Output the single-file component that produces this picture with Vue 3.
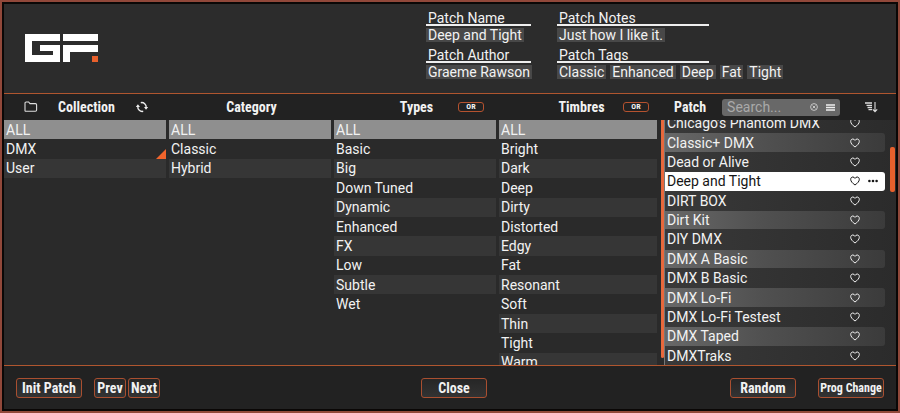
<script setup>
import { ref } from 'vue'

const lists = [
  { title: 'Collection', items: ['ALL', 'DMX', 'User'], tools: true, flagged: 'DMX' },
  { title: 'Category', items: ['ALL', 'Classic', 'Hybrid'] },
  {
    title: 'Types',
    items: ['ALL', 'Basic', 'Big', 'Down Tuned', 'Dynamic', 'Enhanced', 'FX', 'Low', 'Subtle', 'Wet'],
    or: true,
  },
  {
    title: 'Timbres',
    items: ['ALL', 'Bright', 'Dark', 'Deep', 'Dirty', 'Distorted', 'Edgy', 'Fat', 'Resonant', 'Soft', 'Thin', 'Tight', 'Warm'],
    or: true,
    thumb: true,
  },
]
const patches = [
  "Chicago's Phantom DMX", 'Classic+ DMX', 'Dead or Alive', 'Deep and Tight', 'DIRT BOX', 'Dirt Kit', 'DIY DMX',
  'DMX A Basic', 'DMX B Basic', 'DMX Lo-Fi', 'DMX Lo-Fi Testest', 'DMX Taped', 'DMXTraks',
]
const tags = ['Classic', 'Enhanced', 'Deep', 'Fat', 'Tight']
const picked = ref(['ALL', 'ALL', 'ALL', 'ALL'])
const current = ref('Deep and Tight')
const query = ref('')
</script>

<template>
  <div class="frame">
    <header class="top">
      <svg class="logo" viewBox="0 0 73 28" role="img" aria-label="GF">
        <path fill="#fff" d="M0 0H35V7H7V21H28V17H15V11H35V28H0Z" />
        <path fill="#fff" d="M38 0H73V7H38ZM38 11H73V18H45V28H38Z" />
        <path fill="#e8602c" d="M67 22h6v6h-6z" />
      </svg>
      <dl class="info">
        <div class="field">
          <dt>Patch Name</dt>
          <dd><span class="chip">Deep and Tight</span></dd>
        </div>
        <div class="field">
          <dt>Patch Notes</dt>
          <dd><span class="chip">Just how I like it.</span></dd>
        </div>
        <div class="field">
          <dt>Patch Author</dt>
          <dd><span class="chip">Graeme Rawson</span></dd>
        </div>
        <div class="field">
          <dt>Patch Tags</dt>
          <dd class="tags"><span v-for="t in tags" :key="t" class="chip">{{ t }}</span></dd>
        </div>
      </dl>
    </header>

    <main class="browser">
      <section v-for="(l, i) in lists" :key="l.title" class="column" :class="{ scrolls: l.thumb }">
        <div class="head">
          <span class="side">
            <button v-if="l.tools" class="icon" aria-label="Open folder">
              <svg width="14" height="12" viewBox="0 0 14 12">
                <path d="M1 10V2.2Q1 1 2.2 1H4.6L6 2.6H11.4Q12.6 2.6 12.6 3.8V9Q12.6 10.2 11.4 10.2H1.6Q1 10.2 1 9.6Z" fill="none" stroke="#ddd" stroke-width="1.1" />
              </svg>
            </button>
          </span>
          <h2>{{ l.title }}</h2>
          <span class="side" :class="{ end: l.or }">
            <button v-if="l.tools" class="icon" aria-label="Refresh">
              <svg width="12" height="12" viewBox="0 0 12 12">
                <path d="M4.8 1.7A4.4 4.4 0 0 1 10.2 6.4M7.2 10.3A4.4 4.4 0 0 1 1.8 5.6" fill="none" stroke="#eee" stroke-width="1.4" />
                <path d="M8 6h4.2L10 8.8ZM-.2 6H4L1.9 3.2Z" fill="#eee" />
              </svg>
            </button>
            <button v-if="l.or" class="or">OR</button>
          </span>
        </div>
        <div class="body">
          <ul class="rows">
            <li v-for="item in l.items" :key="item">
              <button class="row" :class="{ on: picked[i] === item, flag: l.flagged === item }" @click="picked[i] = item">{{ item }}</button>
            </li>
          </ul>
          <span v-if="l.thumb" class="thumb"></span>
        </div>
      </section>

      <section class="column patch">
        <div class="head">
          <h2>Patch</h2>
          <div class="search">
            <input v-model="query" type="text" placeholder="Search..." aria-label="Search patches" />
            <button class="icon" aria-label="Clear search" @click="query = ''">
              <svg width="8" height="8" viewBox="0 0 8 8" fill="none" stroke="#ddd" stroke-width=".8">
                <circle cx="4" cy="4" r="3.4" />
                <path d="M2.6 2.6 5.4 5.4M5.4 2.6 2.6 5.4" />
              </svg>
            </button>
            <button class="icon" aria-label="Search options">
              <svg width="9" height="7" viewBox="0 0 9 7"><path d="M0 1H9M0 3.5H9M0 6H9" stroke="#eee" stroke-width="1.3" /></svg>
            </button>
          </div>
          <button class="icon sort" aria-label="Sort">
            <svg width="13" height="11" viewBox="0 0 13 11" fill="none" stroke="#ddd">
              <path d="M0 1H7M1.5 3.3H7M2.5 5.5H7M3.5 7.7H7" stroke-width="1.3" />
              <path d="M10 0V9.5M7.8 7.3 10 9.7 12.2 7.3" stroke-width="1.1" />
            </svg>
          </button>
        </div>
        <div class="body">
          <ul class="rows">
            <li v-for="p in patches" :key="p" class="preset" :class="{ active: p === current }">
              <button class="name" @click="current = p">{{ p }}</button>
              <button class="icon" :aria-label="'Favourite ' + p">
                <svg width="10" height="10" viewBox="0 0 10 10">
                  <path d="M5 9C2.5 7.2.7 5.4.7 3.4.7 1.9 1.7 1 2.8 1 3.8 1 4.6 1.6 5 2.4 5.4 1.6 6.2 1 7.2 1 8.3 1 9.3 1.9 9.3 3.4 9.3 5.4 7.5 7.2 5 9Z" fill="none" stroke="currentColor" />
                </svg>
              </button>
              <span class="more">
                <button v-if="p === current" class="icon" aria-label="More actions">
                  <svg width="10" height="4" viewBox="0 0 10 4" fill="currentColor"><circle cx="1.4" cy="2" r="1.3" /><circle cx="5" cy="2" r="1.3" /><circle cx="8.6" cy="2" r="1.3" /></svg>
                </button>
              </span>
            </li>
          </ul>
          <div class="track"><span class="knob"></span></div>
        </div>
      </section>
    </main>

    <footer class="actions">
      <div class="group">
        <button class="btn">Init Patch</button>
        <span class="pair">
          <button class="btn small">Prev</button>
          <button class="btn small">Next</button>
        </span>
      </div>
      <button class="btn">Close</button>
      <div class="group right">
        <button class="btn">Random</button>
        <button class="btn long">Prog Change</button>
      </div>
    </footer>
  </div>
</template>

<style>
body {
  background: #000;
}
</style>

<style scoped>
* {
  box-sizing: border-box;
  margin: 0;
  padding: 0;
}
.frame {
  display: flex;
  flex-direction: column;
  height: 100vh;
  border: 2px solid #91483a;
  padding: 2px;
  background: #0a0706;
  color: #f2f2f2;
  font: 14px/16px Roboto, "Noto Sans", sans-serif;
}
button,
input {
  font: inherit;
  color: inherit;
  background: none;
  border: 0;
}
button {
  cursor: pointer;
  white-space: nowrap;
}
ul {
  list-style: none;
}
svg {
  display: block;
}
.top {
  display: grid;
  grid-template-columns: 422fr 470fr;
  align-items: start;
  height: 90px;
  flex: none;
  background: #2c2c2c;
  border-bottom: 1px solid #b0562f;
}
.logo {
  width: 73px;
  margin: 30px 0 0 21px;
}
.info {
  display: grid;
  grid-template-columns: 105px 152px;
  column-gap: 26px;
  row-gap: 5px;
  padding-top: 6px;
}
dt {
  padding-left: 2px;
  border-bottom: 2px solid #eee;
  height: 16px;
}
dd {
  display: flex;
  padding-top: 2px;
}
.tags {
  gap: 4px;
}
.chip {
  padding: 0 2px;
  line-height: 14px;
  white-space: nowrap;
  background: #484848;
}
.browser {
  display: grid;
  grid-template-columns: repeat(4, minmax(0, 165fr)) minmax(0, 232fr);
  flex: 1;
  min-height: 0;
  background: #2a2a2a;
}
.column {
  display: flex;
  flex-direction: column;
  min-width: 0;
  min-height: 0;
}
.head {
  display: grid;
  grid-template-columns: 1fr auto 1fr;
  align-items: center;
  flex: none;
  height: 26px;
  background: #222;
}
h2,
.btn {
  font: bold 14px/20px "Roboto Condensed", "Liberation Sans Narrow", sans-serif;
}
.side {
  display: flex;
  justify-content: center;
}
.end {
  justify-content: flex-end;
  padding-right: 15px;
}
.or {
  width: 26px;
  height: 10px;
  border: 1px solid #b5522f;
  border-radius: 3px;
  font: bold 8px/8px "Roboto Condensed", "Liberation Sans Narrow", sans-serif;
}
.body {
  display: flex;
  flex: 1;
  min-height: 0;
  padding-right: 3px;
  overflow: hidden;
}
.rows {
  display: grid;
  grid-template-rows: repeat(13, minmax(0, 1fr));
  flex: 1;
  min-width: 0;
  height: 252px;
}
.row {
  display: flex;
  align-items: center;
  position: relative;
  width: 100%;
  height: 100%;
  padding-left: 2px;
}
li:nth-child(odd) .row {
  background: #363636;
}
li .row.on {
  background: #8f8f8f;
}
.flag::after {
  content: "";
  position: absolute;
  right: 0;
  bottom: 0;
  border: 5px solid transparent;
  border-right-color: #f0642c;
  border-bottom-color: #f0642c;
}
.scrolls .body {
  gap: 4px;
  padding-right: 0;
}
.thumb {
  width: 3px;
  margin-bottom: 7px;
  border-radius: 0 0 2px 2px;
  background: #e8683c;
}
.patch .head {
  grid-template-columns: auto minmax(0, 118px) 1fr;
  gap: 16px;
  padding: 0 10px;
}
.search {
  display: flex;
  align-items: center;
  gap: 8px;
  height: 17px;
  padding: 0 5px;
  border-radius: 3px;
  background: #686868;
}
.search input {
  flex: 1;
  min-width: 0;
  outline: 0;
}
.search input::placeholder {
  color: #aaa;
  opacity: 1;
}
.sort {
  justify-self: center;
}
.patch .body {
  padding-right: 1px;
  background: linear-gradient(90deg, #393939, #2b2b2b);
}
.patch .rows {
  margin-top: -6px;
  border-left: 1px solid #777;
}
.preset {
  display: flex;
  align-items: center;
  margin-bottom: 1px;
  padding-left: 2px;
  border-radius: 0 3px 3px 0;
}
.preset:nth-child(even) {
  background: linear-gradient(90deg, #686868, #505050 45%, #3b3b3b);
}
.preset.active {
  background: #fff;
  color: #151515;
}
.name {
  flex: 1;
  min-width: 0;
  text-align: left;
}
.more {
  display: flex;
  justify-content: center;
  width: 25px;
}
.track {
  width: 10px;
  padding: 27px 0 0 5px;
}
.knob {
  display: block;
  width: 5px;
  height: 45px;
  border-radius: 2px;
  background: #e8602c;
}
.actions {
  display: grid;
  grid-template-columns: 405fr 66px 397fr;
  align-items: center;
  flex: none;
  height: 44px;
  padding: 0 12px;
  border-top: 1px solid #b0562f;
  background: #222;
}
.group,
.pair {
  display: flex;
  gap: 12px;
}
.pair {
  gap: 2px;
}
.right {
  justify-content: flex-end;
  gap: 22px;
}
.btn {
  width: 66px;
  height: 20px;
  border: 1px solid #a94f30;
  border-radius: 3px;
  background: linear-gradient(#262626, #333);
  line-height: 18px;
}
.small {
  width: 32px;
}
.long {
  font-size: 12px;
}
</style>
